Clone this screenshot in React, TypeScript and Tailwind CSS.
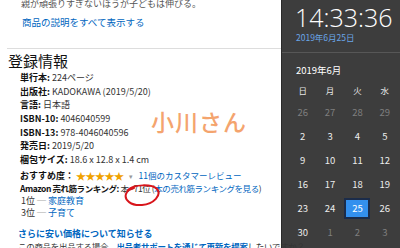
import React from 'react';

const jp = "font-['Noto_Sans_CJK_JP','Noto_Sans',sans-serif]";

const details: { label: string; value: string }[] = [
  { label: '単行本', value: '224ページ' },
  { label: '出版社', value: 'KADOKAWA (2019/5/20)' },
  { label: '言語', value: '日本語' },
  { label: 'ISBN-10', value: '4046040599' },
  { label: 'ISBN-13', value: '978-4046040596' },
  { label: '発売日', value: ' 2019/5/20' },
  { label: '梱包サイズ', value: '18.6 x 12.8 x 1.4 cm' },
];

const weeks: { d: string; dim?: boolean; today?: boolean }[][] = [
  [{ d: '26', dim: true }, { d: '27', dim: true }, { d: '28', dim: true }, { d: '29', dim: true }],
  [{ d: '2' }, { d: '3' }, { d: '4' }, { d: '5' }],
  [{ d: '9' }, { d: '10' }, { d: '11' }, { d: '12' }],
  [{ d: '16' }, { d: '17' }, { d: '18' }, { d: '19' }],
  [{ d: '23' }, { d: '24' }, { d: '25', today: true }, { d: '26' }],
  [{ d: '30' }, { d: '1', dim: true }, { d: '2', dim: true }, { d: '3', dim: true }],
];

function ProductDetails() {
  return (
    <div className={`relative w-[281px] h-full bg-white text-[#333] ${jp}`}>
      <div className="-mt-[3px] h-[14px] pl-[21px] text-[9px] leading-[14px] text-[#555] whitespace-nowrap">
        親が頑張りすぎないほうが子どもは伸びる。
      </div>
      <div className="mt-[5px] h-[12px] pl-[22px] text-[9.5px] leading-[12px] text-[#0066c0]">
        商品の説明をすべて表示する
      </div>
      <div className="mt-[20px] ml-[7px] h-px bg-[#dddddd]" />
      <div className="mt-[3px] h-[18px] pl-[8px] text-[15px] leading-[18px] text-[#111]">登録情報</div>

      <div className="mt-[1px] pl-[20px] text-[9px]">
        {details.map((r) => (
          <div key={r.label} className="h-[13.66px] leading-[13.66px] whitespace-nowrap">
            <span className="font-bold text-[#111]">{r.label}:</span> {r.value}
          </div>
        ))}
      </div>

      <div className="mt-[3px] pl-[20px] text-[9px] whitespace-nowrap">
        <div className="h-[12.5px] flex items-center">
          <span className="font-bold text-[#111]">おすすめ度：</span>
          <span className="ml-[2px] text-[10px] tracking-[-0.5px] text-[#f0a200]">★★★★★</span>
          <span className="ml-[5px] text-[7px] text-[#999]">▾</span>
          <span className="ml-[6px] text-[8.5px] text-[#0066c0]">11個のカスタマーレビュー</span>
        </div>
        <div className="h-[12.5px] leading-[12.5px] text-[8.5px] tracking-[-0.45px]">
          <span className="font-bold text-[#111]">Amazon 売れ筋ランキング:</span> 本 - 71位 (
          <span className="text-[#0066c0]">本の売れ筋ランキングを見る</span>)
        </div>
        <div className="h-[12.5px] leading-[12.5px] pl-[1px]">
          1位 ─ <span className="text-[#0066c0]">家庭教育</span>
        </div>
        <div className="h-[12.5px] leading-[12.5px] pl-[1px]">
          3位 ─ <span className="text-[#0066c0]">子育て</span>
        </div>
      </div>

      <div className="mt-[8px] pl-[18px] text-[9px] whitespace-nowrap">
        <div className="h-[12px] leading-[12px] font-bold text-[#0066c0]">さらに安い価格について知らせる</div>
        <div className="h-[12px] leading-[12px] text-[8.5px] tracking-[-0.3px]">
          この商品を出品する場合、<span className="font-bold text-[#0066c0]">出品者サポートを通じて更新を提案</span>したいですか？
        </div>
      </div>

      {/* hand-drawn annotations */}
      <div className="absolute left-[151px] top-[106px] text-[23px] leading-[30px] tracking-[1px] text-[#f4a46e] font-medium">
        小川さん
      </div>
      <svg className="absolute left-[122px] top-[181px]" width="40" height="28" viewBox="0 0 40 28">
        <path
          d="M6 9 C12 3 30 3 35 8 C40 14 32 23 20 24 C9 25 2 19 4 13 C5 10 8 8 12 7"
          fill="none"
          stroke="#d8151b"
          strokeWidth="2"
          strokeLinecap="round"
        />
      </svg>
    </div>
  );
}

function ClockPanel() {
  return (
    <div className={`flex-1 h-full bg-[#3d3d3d] border-l border-[#2a2a2a] text-white ${jp}`}>
      <div className="pl-[13px] pt-[3px] h-[31px] text-[25px] leading-[28px] font-light font-['Open_Sans',sans-serif]">
        14:33:36
      </div>
      <div className="pl-[14px] h-[12px] text-[8.5px] leading-[12px] text-[#6aa6e8]">2019年6月25日</div>
      <div className="mt-[9px] h-px bg-[#575757]" />
      <div className="mt-[10px] pl-[14px] h-[14px] text-[9.5px] leading-[14px]">2019年6月</div>

      <div className="mt-[4px] pl-[7px]">
        <div className="flex h-[19px] items-center text-[8.5px] text-[#e6e6e6]">
          {['日', '月', '火', '水'].map((w) => (
            <div key={w} className="w-[27.4px] shrink-0 text-center">{w}</div>
          ))}
        </div>
        {weeks.map((week, i) => (
          <div key={i} className="flex h-[24px] items-center text-[9.5px]">
            {week.map((c, j) => (
              <div key={j} className="w-[27.4px] shrink-0 flex justify-center">
                {c.today ? (
                  <div className="w-[26px] h-[21px] flex items-center justify-center bg-[#3390ee] border-2 border-[#1b2c4a] text-white">
                    {c.d}
                  </div>
                ) : (
                  <span className={c.dim ? 'text-[#7f7f7f]' : 'text-[#ececec]'}>{c.d}</span>
                )}
              </div>
            ))}
          </div>
        ))}
      </div>
    </div>
  );
}

export default function App() {
  return (
    <div className="w-[400px] h-[248px] overflow-hidden flex">
      <ProductDetails />
      <ClockPanel />
    </div>
  );
}
